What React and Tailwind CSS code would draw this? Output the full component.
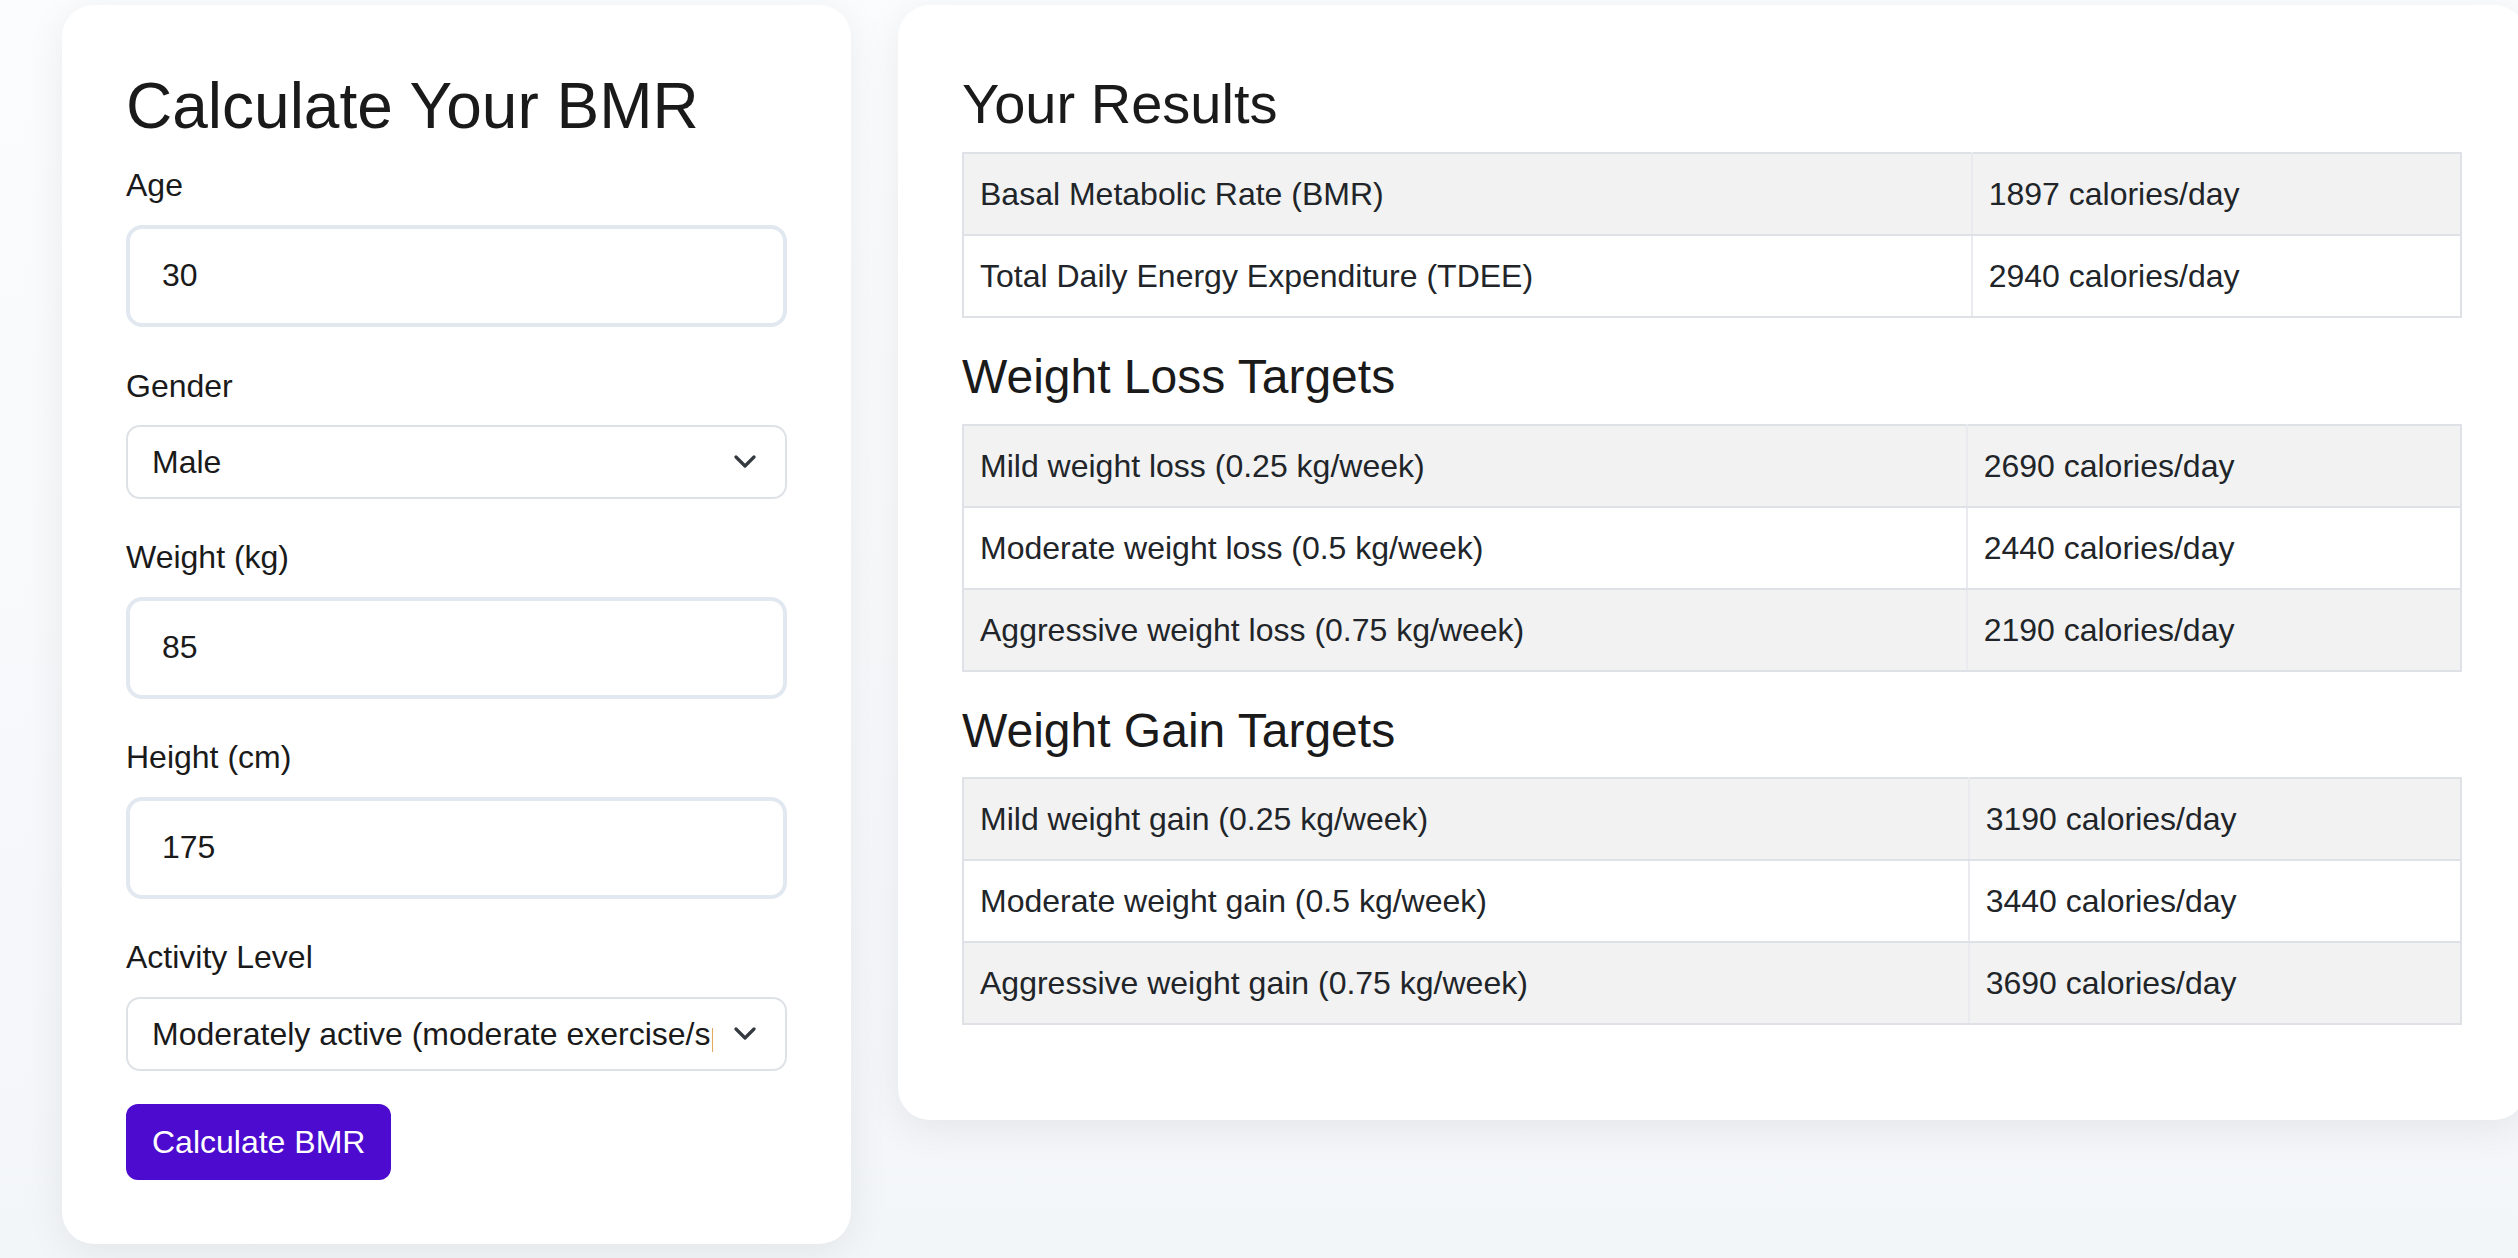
import React from 'react';

const results = [
  ['Basal Metabolic Rate (BMR)', '1897 calories/day'],
  ['Total Daily Energy Expenditure (TDEE)', '2940 calories/day'],
];

const lossTargets = [
  ['Mild weight loss (0.25 kg/week)', '2690 calories/day'],
  ['Moderate weight loss (0.5 kg/week)', '2440 calories/day'],
  ['Aggressive weight loss (0.75 kg/week)', '2190 calories/day'],
];

const gainTargets = [
  ['Mild weight gain (0.25 kg/week)', '3190 calories/day'],
  ['Moderate weight gain (0.5 kg/week)', '3440 calories/day'],
  ['Aggressive weight gain (0.75 kg/week)', '3690 calories/day'],
];

function Chevron() {
  return (
    <svg
      className="pointer-events-none absolute right-[31px] top-1/2 -translate-y-1/2 w-[22px] h-[14px]"
      viewBox="0 0 22 14"
      fill="none"
    >
      <path d="M2 2 L11 11 L20 2" stroke="#343a40" strokeWidth="3.2" strokeLinecap="round" strokeLinejoin="round" />
    </svg>
  );
}

function NumberField({ label, value, labelTop }) {
  return (
    <div className={labelTop}>
      <label className="block text-[32px] leading-[48px] mb-[16px] text-[#1a1a1a]">{label}</label>
      <input
        type="number"
        defaultValue={value}
        className="block w-full h-[102px] px-[32px] border-[4px] border-[#e2e8f0] rounded-[16px] bg-white text-[32px] text-[#1a1a1a] outline-none font-['Liberation_Sans',Arial,sans-serif]"
      />
    </div>
  );
}

function SelectField({ label, options, labelTop, labelGap }) {
  return (
    <div className={labelTop}>
      <label className={`block text-[32px] leading-[48px] text-[#1a1a1a] ${labelGap}`}>{label}</label>
      <div className="relative">
        <select
          defaultValue={options[0]}
          className="block w-full h-[74px] pl-[24px] pr-[72px] border-2 border-[#dee2e6] rounded-[14px] bg-white appearance-none text-[32px] text-[#1a1a1a] outline-none font-['Liberation_Sans',Arial,sans-serif]"
        >
          {options.map((o) => (
            <option key={o}>{o}</option>
          ))}
        </select>
        <Chevron />
      </div>
    </div>
  );
}

function ResultTable({ rows, className }) {
  return (
    <table className={`w-full border-collapse text-[32px] leading-[48px] text-[#212529] ${className}`}>
      <tbody>
        {rows.map(([name, val], i) => (
          <tr key={name} className={i % 2 === 0 ? 'bg-[#f2f2f2]' : 'bg-white'}>
            <td className="border-2 border-[#dee2e6] border-r-[#e9ebee] px-[16px] py-[16px] text-left">{name}</td>
            <td className="border-2 border-[#dee2e6] px-[16px] py-[16px] text-left">{val}</td>
          </tr>
        ))}
      </tbody>
    </table>
  );
}

export default function App() {
  return (
    <div className="min-h-screen overflow-hidden bg-gradient-to-b from-[#fbfcfd] to-[#f3f6f9] font-['Liberation_Sans',Arial,sans-serif] text-[#1a1a1a]">
      <div className="flex items-start gap-[47px] pl-[62px] pt-[5px]">
        {/* Form card */}
        <div className="w-[789px] shrink-0 bg-white rounded-[32px] p-[64px] pt-[65px] shadow-[0_8px_40px_rgba(0,0,0,0.07)]">
          <h1 className="text-[64px] leading-[1.15] font-normal mb-[17px]">Calculate Your BMR</h1>
          <NumberField label="Age" value="30" labelTop="" />
          <SelectField label="Gender" options={['Male', 'Female']} labelTop="mt-[35px]" labelGap="mb-[15px]" />
          <NumberField label="Weight (kg)" value="85" labelTop="mt-[34px]" />
          <NumberField label="Height (cm)" value="175" labelTop="mt-[34px]" />
          <SelectField
            label="Activity Level"
            options={[
              'Moderately active (moderate exercise/sports 3-5 days/week)',
              'Sedentary (little or no exercise)',
              'Lightly active (light exercise/sports 1-3 days/week)',
              'Very active (hard exercise/sports 6-7 days a week)',
            ]}
            labelTop="mt-[34px]"
            labelGap="mb-[16px]"
          />
          <button className="mt-[33px] h-[76px] px-[26px] rounded-[12px] bg-[#4c0bcf] text-white text-[32px] leading-[48px]">
            Calculate BMR
          </button>
        </div>

        {/* Results card */}
        <div className="w-[1628px] shrink-0 bg-white rounded-[32px] px-[64px] pt-[65px] pb-[64px] shadow-[0_8px_40px_rgba(0,0,0,0.07)]">
          <h2 className="text-[56px] leading-[1.2] font-normal mb-[15px]">Your Results</h2>
          <ResultTable rows={results} className="mb-[30px]" />
          <h3 className="text-[48px] leading-[1.2] font-normal mb-[18px]">Weight Loss Targets</h3>
          <ResultTable rows={lossTargets} className="mb-[30px]" />
          <h3 className="text-[48px] leading-[1.2] font-normal mb-[18px]">Weight Gain Targets</h3>
          <ResultTable rows={gainTargets} className="mb-[31px]" />
        </div>
      </div>
    </div>
  );
}
